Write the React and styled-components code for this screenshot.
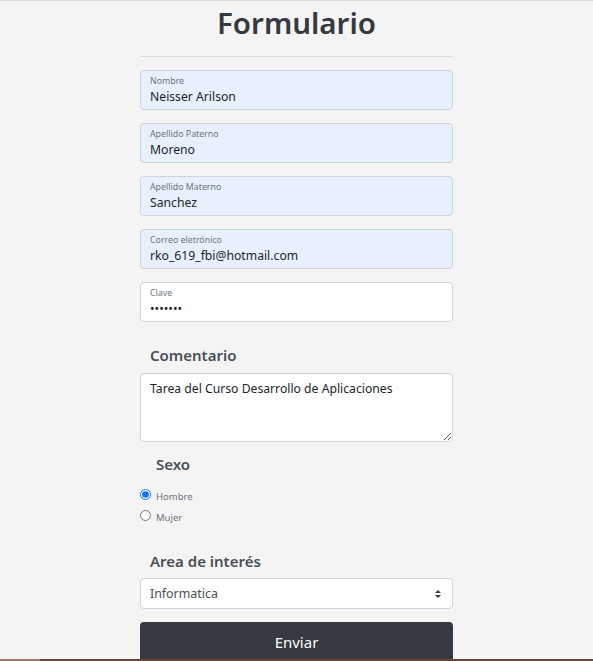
import styled, { createGlobalStyle } from "styled-components";

const Global = createGlobalStyle`
  html, body { margin: 0; padding: 0; }
  body {
    background: #f4f4f4;
    font-family: "Noto Sans", "Open Sans", sans-serif;
    color: #212529;
  }
`;

const Page = styled.div`
  height: 100vh;
  overflow: hidden;
  border-top: 1px solid #dcdcdc;
  box-sizing: border-box;
  position: relative;
`;

const Form = styled.form`
  width: 313px;
  margin: 0 auto;
  display: flex;
  flex-direction: column;
`;

const Title = styled.h1`
  margin: 3px 0 0;
  text-align: center;
  font-size: 29.5px;
  line-height: 37px;
  font-weight: 600;
  color: #343a40;
`;

const Rule = styled.hr`
  margin: 15px 0 13px;
  border: 0;
  border-top: 1px solid #dcdcdc;
`;

const Floating = styled.label`
  display: flex;
  flex-direction: column;
  height: 40px;
  box-sizing: border-box;
  padding: 5px 9px 0;
  margin-bottom: 13px;
  border: 1px solid #ced4da;
  border-radius: 4px;
  background: ${(p) => (p.$filled ? "#e8f0fe" : "#ffffff")};
`;

const FloatLabel = styled.span`
  font-size: 8.8px;
  line-height: 11px;
  color: #6c757d;
`;

const FloatInput = styled.input`
  border: 0;
  outline: 0;
  padding: 0;
  margin: 1px 0 0;
  background: transparent;
  font-family: inherit;
  font-size: 12.2px;
  line-height: 18px;
  color: #212529;
`;

const SectionLabel = styled.div`
  font-size: 15px;
  line-height: 20px;
  font-weight: 600;
  color: #495057;
  padding-left: ${(p) => p.$indent || 10}px;
  margin: ${(p) => p.$top || 0}px 0 ${(p) => p.$bottom || 7}px;
`;

const Comment = styled.textarea`
  height: 69px;
  box-sizing: border-box;
  padding: 6px 9px;
  border: 1px solid #ced4da;
  border-radius: 4px;
  background: #fff;
  font-family: inherit;
  font-size: 12.2px;
  line-height: 18px;
  color: #212529;
  resize: vertical;
  outline: 0;
`;

const RadioRow = styled.label`
  display: flex;
  align-items: center;
  gap: 5px;
  height: 21px;
  font-size: 9.5px;
  color: #6c757d;
`;

const Radio = styled.input`
  width: 11px;
  height: 11px;
  margin: 0;
  accent-color: #0d6efd;
  position: relative;
  top: -2px;
`;

const SelectBox = styled.div`
  height: 31px;
  box-sizing: border-box;
  display: flex;
  align-items: center;
  justify-content: space-between;
  padding: 0 10px 0 9px;
  border: 1px solid #ced4da;
  border-radius: 4px;
  background: #fff;
  font-size: 12.4px;
  color: #495057;
`;

const Submit = styled.button`
  margin-top: 13px;
  height: 40px;
  border: 0;
  border-radius: 4px;
  background: #343a40;
  color: #fff;
  font-family: inherit;
  font-size: 15px;
  padding-top: 0;
`;

const BottomStrip = styled.div`
  position: absolute;
  left: 0;
  right: 0;
  bottom: 0;
  height: 2px;
  background: linear-gradient(to right, #a07868 0 40px, #6e4436 40px);
`;

const fields = [
  { label: "Nombre", value: "Neisser Arilson", filled: true },
  { label: "Apellido Paterno", value: "Moreno", filled: true },
  { label: "Apellido Materno", value: "Sanchez", filled: true },
  { label: "Correo eletrónico", value: "rko_619_fbi@hotmail.com", filled: true },
  { label: "Clave", value: "1234567", filled: false, type: "password" },
];

const Caret = () => (
  <svg width="8" height="10" viewBox="0 0 8 10">
    <path d="M4 1 L7 4 H1 Z M4 9 L1 6 H7 Z" fill="#343a40" />
  </svg>
);

export default function App() {
  return (
    <Page>
      <Global />
      <Form onSubmit={(e) => e.preventDefault()}>
        <Title>Formulario</Title>
        <Rule />
        {fields.map((f) => (
          <Floating key={f.label} $filled={f.filled}>
            <FloatLabel>{f.label}</FloatLabel>
            <FloatInput type={f.type || "text"} value={f.value} readOnly />
          </Floating>
        ))}
        <SectionLabel $top={10} $bottom={8}>Comentario</SectionLabel>
        <Comment defaultValue="Tarea del Curso Desarrollo de Aplicaciones" />
        <SectionLabel $indent={16} $top={12} $bottom={12}>Sexo</SectionLabel>
        <RadioRow>
          <Radio type="radio" name="sexo" defaultChecked />
          Hombre
        </RadioRow>
        <RadioRow>
          <Radio type="radio" name="sexo" />
          Mujer
        </RadioRow>
        <SectionLabel $top={23} $bottom={7}>Area de interés</SectionLabel>
        <SelectBox>
          Informatica
          <Caret />
        </SelectBox>
        <Submit type="submit">Enviar</Submit>
      </Form>
      <BottomStrip />
    </Page>
  );
}
